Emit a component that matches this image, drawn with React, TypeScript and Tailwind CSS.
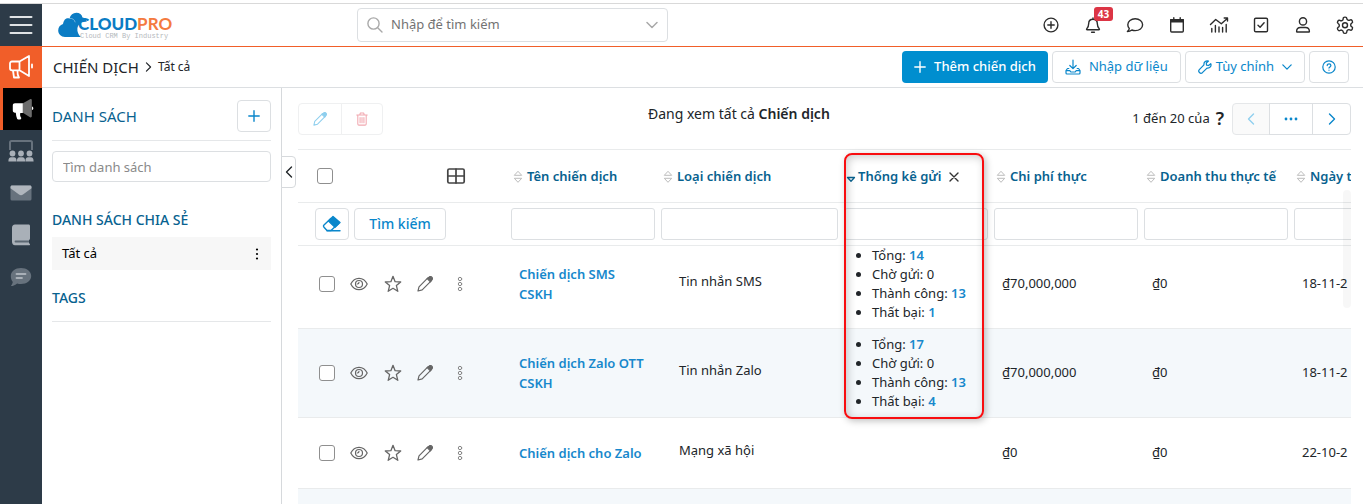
import type { ReactNode } from 'react';

type IconProps = { children: ReactNode; box?: string; className?: string; width?: number };

function Icon({ children, box = '0 0 20 20', className = 'size-5', width = 1.4 }: IconProps) {
  return (
    <svg
      viewBox={box}
      className={className}
      fill="none"
      stroke="currentColor"
      strokeWidth={width}
      strokeLinecap="round"
      strokeLinejoin="round"
      aria-hidden="true"
    >
      {children}
    </svg>
  );
}

const Plus = ({ className = 'size-3' }: { className?: string }) => (
  <Icon box="0 0 12 12" className={className} width={1.4}><path d="M6 .8v10.4M.8 6h10.4" /></Icon>
);
const ChevronRight = ({ className }: { className: string }) => (
  <Icon box="0 0 8 12" className={className} width={1.4}><path d="M1.5 1 6.5 6l-5 5" /></Icon>
);
const ChevronLeft = ({ className }: { className: string }) => (
  <Icon box="0 0 8 12" className={className} width={1.4}><path d="M6.5 1 1.5 6l5 5" /></Icon>
);
const ChevronDown = ({ className }: { className: string }) => (
  <Icon box="0 0 12 8" className={className} width={1.5}><path d="m1 1.500 5 5 5-5" /></Icon>
);
const Pencil = ({ className = 'size-4' }: { className?: string }) => (
  <Icon box="0 0 16 16" className={className} width={1.2}>
    <path d="M1 15l1-4.200L10.600 2.200a2.100 2.100 0 0 1 3.100 3.100L5.200 13.900 1 15Z" />
    <path d="M10.200 2.600 12 1.200a1.800 1.800 0 0 1 2.800 2.800l-1.400 1.800Z" fill="currentColor" />
  </Icon>
);

const headerIcons: { label: string; icon: ReactNode }[] = [
  { label: 'Tạo nhanh', icon: <Icon><circle cx="10" cy="10" r="6.900" /><path d="M10 6.800v6.400M6.800 10h6.400" /></Icon> },
  {
    label: 'Thông báo',
    icon: (
      <Icon>
        <path d="M10 3v1.200M10 4.200c-2.700 0-4.300 1.900-4.300 4.300 0 3.100-.8 4.100-2 5.400-.3.400-.1.900.4.900h11.800c.5 0 .7-.5.4-.9-1.200-1.300-2-2.300-2-5.400 0-2.400-1.600-4.300-4.300-4.300Z" />
        <path d="M8.600 17.200h2.800" />
      </Icon>
    ),
  },
  { label: 'Tin nhắn', icon: <Icon><path d="M10.200 3.800c4.200 0 7.400 2.500 7.400 5.900s-3.200 5.900-7.400 5.900c-1.200 0-2.300-.2-3.300-.6-1.200.9-2.700 1.500-4.500 1.500 1.200-1.100 1.800-2.100 1.900-3-1-1-1.500-2.300-1.500-3.800 0-3.400 3.200-5.900 7.400-5.900Z" /></Icon> },
  {
    label: 'Lịch',
    icon: (
      <Icon>
        <rect x="3.700" y="4.600" width="12.600" height="12.400" rx="1" />
        <path d="M3.700 4.600h12.600v2.200H3.700zM6.800 2.800v2M13.200 2.800v2" fill="currentColor" />
      </Icon>
    ),
  },
  {
    label: 'Báo cáo',
    icon: (
      <Icon>
        <path d="m1.500 9.500 5.200-5 5.600 4.300 6-5.300M15.200 3h3.300v3" />
        <path d="M2.800 13.500V17M6.400 10.500V17M10 12v5M13.600 12.500V17M17.200 9.500V17" />
      </Icon>
    ),
  },
  { label: 'Công việc', icon: <Icon><rect x="3.500" y="3.300" width="13" height="13.400" rx="1.300" /><path d="m7 10.200 2.100 2 4-4.400" /></Icon> },
  { label: 'Tài khoản', icon: <Icon><circle cx="10" cy="6.400" r="3.600" /><path d="M3.600 16.500c0-2.500 1.700-4 3.900-4h5c2.200 0 3.900 1.500 3.900 4 0 .3-.2.500-.5.500H4.100c-.3 0-.5-.2-.5-.5Z" /></Icon> },
  {
    label: 'Cài đặt',
    icon: (
      <Icon box="0 0 24 24" width={1.7}>
        <path d="M12.220 2.500h-.44a2 2 0 0 0-2 2v.18a2 2 0 0 1-1 1.730l-.43.250a2 2 0 0 1-2 0l-.15-.08a2 2 0 0 0-2.730.730l-.22.380a2 2 0 0 0 .730 2.730l.15.100a2 2 0 0 1 1 1.720v.510a2 2 0 0 1-1 1.740l-.15.090a2 2 0 0 0-.73 2.730l.22.380a2 2 0 0 0 2.730.730l.15-.08a2 2 0 0 1 2 0l.43.250a2 2 0 0 1 1 1.730V20a2 2 0 0 0 2 2h.44a2 2 0 0 0 2-2v-.18a2 2 0 0 1 1-1.730l.43-.25a2 2 0 0 1 2 0l.15.080a2 2 0 0 0 2.730-.73l.22-.39a2 2 0 0 0-.73-2.730l-.15-.08a2 2 0 0 1-1-1.740v-.5a2 2 0 0 1 1-1.740l.15-.09a2 2 0 0 0 .730-2.730l-.22-.38a2 2 0 0 0-2.730-.73l-.15.080a2 2 0 0 1-2 0l-.43-.25a2 2 0 0 1-1-1.730V4.500a2 2 0 0 0-2-2z" />
        <circle cx="12" cy="12.200" r="3" />
      </Icon>
    ),
  },
];

const railIcons: { label: string; icon: ReactNode }[] = [
  {
    label: 'Sự kiện',
    icon: (
      <svg viewBox="0 0 26 22" className="h-[22px] w-[26px]" fill="#a9b0b8" aria-hidden="true">
        <path d="M2 10V2.500C2 1.500 2.700 1 3.500 1h19c.8 0 1.500.5 1.500 1.500V10" fill="none" stroke="#67727d" strokeWidth="2" />
        <circle cx="4.500" cy="13.500" r="2.900" /><circle cx="13" cy="13.500" r="2.900" /><circle cx="21.500" cy="13.500" r="2.900" />
        <path d="M.4 21.500c0-3 1-4.300 2.600-4.300h3c1.600 0 2.600 1.300 2.600 4.300ZM8.900 21.500c0-3 1-4.300 2.600-4.300h3c1.600 0 2.600 1.300 2.600 4.300ZM17.400 21.500c0-3 1-4.300 2.600-4.300h3c1.600 0 2.600 1.300 2.600 4.300Z" />
      </svg>
    ),
  },
  {
    label: 'Email',
    icon: (
      <svg viewBox="0 0 22 16" className="h-4 w-[22px]" aria-hidden="true">
        <rect x=".5" y=".5" width="21" height="15" rx="1.500" fill="#67727d" />
        <path d="M2 .5h18c.9 0 1.500.6 1.500 1.500v1.200L13 9.500c-1.200.9-2.800.9-4 0L.5 3.200V2C.5 1.100 1.100.5 2 .5Z" fill="#b0b6bd" />
      </svg>
    ),
  },
  {
    label: 'Tài liệu',
    icon: (
      <svg viewBox="0 0 20 22" className="h-[22px] w-5" aria-hidden="true">
        <path d="M4 .5h13.500c1 0 1.500.6 1.500 1.500v12.500c0 .8-.4 1.300-1 1.500v3.500h.5c.7 0 .7 1.700 0 1.700H4C2 21.200 1 19.700 1 17.800V3.800C1 1.800 2.100.5 4 .5Z" fill="#a9b0b8" />
        <path d="M4.500 16.500H18v2H4.500c-1.200 0-1.200-2 0-2Z" fill="#5b6772" />
      </svg>
    ),
  },
  {
    label: 'Bình luận',
    icon: (
      <svg viewBox="0 0 22 20" className="h-5 w-[22px]" aria-hidden="true">
        <path d="M11 1c5.700 0 10.200 3.500 10.200 8s-4.500 8-10.200 8c-1.400 0-2.700-.2-3.900-.6C5.500 17.800 3.300 19 .9 19c1-1.300 1.700-2.700 1.900-4C1.500 13.300.8 11.300.8 9 .8 4.500 5.300 1 11 1Z" fill="#67727d" />
        <path d="M6.500 7h9M6.500 11h5.500" stroke="#a9b0b8" strokeWidth="1.800" strokeLinecap="round" />
      </svg>
    ),
  },
];

type Stats = { total: number; waiting: number; success: number; failed: number };
type Campaign = { name: string; type: string; stats?: Stats; cost: string; revenue: string; date: string; height: string };

const campaigns: Campaign[] = [
  { name: 'Chiến dịch SMS CSKH', type: 'Tin nhắn SMS', stats: { total: 14, waiting: 0, success: 13, failed: 1 }, cost: '₫70,000,000', revenue: '₫0', date: '18-11-2', height: 'h-[82px] [&>td]:pb-1.5' },
  { name: 'Chiến dịch Zalo OTT CSKH', type: 'Tin nhắn Zalo', stats: { total: 17, waiting: 0, success: 13, failed: 4 }, cost: '₫70,000,000', revenue: '₫0', date: '18-11-2', height: 'h-[89px]' },
  { name: 'Chiến dịch cho Zalo', type: 'Mạng xã hội', cost: '₫0', revenue: '₫0', date: '22-10-2', height: 'h-[71px]' },
];

function SortIcon() {
  return (
    <svg viewBox="0 0 10 14" className="h-3.5 w-2.5 shrink-0" fill="none" stroke="#bdbdbd" strokeLinejoin="round" aria-hidden="true">
      <path d="M5 1.300 8.700 5.300H1.300ZM1.300 8.300h7.400L5 12.300Z" />
    </svg>
  );
}

function HeaderCell({ label }: { label: string }) {
  return (
    <th className="pl-[5px] pt-0.5 text-left font-semibold text-[#08628f]">
      <span className="flex items-center gap-1 whitespace-nowrap text-[13px]"><SortIcon />{label}</span>
    </th>
  );
}

const outlined = 'flex h-8 items-center justify-center rounded border border-[#dcdfe2] bg-white text-[#0a87cb]';

function StatsList({ stats }: { stats: Stats }) {
  const count = 'font-semibold text-[#1788cc]';
  return (
    <ul className="list-disc pl-[31px] leading-[19px]">
      <li>Tổng: <a href="#total" className={count}>{stats.total}</a></li>
      <li>Chờ gửi: {stats.waiting}</li>
      <li>Thành công: <a href="#success" className={count}>{stats.success}</a></li>
      <li>Thất bại: <a href="#failed" className={count}>{stats.failed}</a></li>
    </ul>
  );
}

function CampaignRow({ row }: { row: Campaign }) {
  return (
    <tr className={`border-b border-[#e9ebec] even:bg-[#f4f8fb] ${row.height}`}>
      <td>
        <div className="flex items-center pl-[21px] text-[#666]">
          <input type="checkbox" aria-label={`Chọn ${row.name}`} className="size-4 appearance-none rounded-[3px] border border-[#8f8f8f] bg-white" />
          <button aria-label="Xem" className="ml-[15px]">
            <Icon box="0 0 18 14" className="h-3.5 w-[18px]" width={1.2}>
              <path d="M.8 7C2.500 3.500 5.500 1.300 9 1.300S15.500 3.500 17.200 7c-1.700 3.500-4.700 5.700-8.200 5.700S2.500 10.500.8 7Z" />
              <circle cx="9" cy="7" r="3.500" /><path d="M9 5.300A1.700 1.700 0 0 1 7.300 7" />
            </Icon>
          </button>
          <button aria-label="Yêu thích" className="ml-4">
            <Icon box="0 0 18 18" className="size-[18px]" width={1.3}>
              <path d="m9 1.300 2.100 5.400 5.600.3-4.300 3.600 1.400 5.700L9 13.300l-4.800 3 1.400-5.700L1.300 7l5.600-.3Z" />
            </Icon>
          </button>
          <button aria-label="Sửa" className="ml-[15px]"><Pencil /></button>
          <button aria-label="Thêm" className="ml-6 text-[#888]">
            <Icon box="0 0 6 16" className="h-4 w-1.5" width={1}>
              <circle cx="3" cy="3" r="1.700" /><circle cx="3" cy="8" r="1.700" /><circle cx="3" cy="13" r="1.700" />
            </Icon>
          </button>
        </div>
      </td>
      <td className="px-[11px]"><a href="#campaign" className="block font-semibold leading-5 text-[#1788cc]">{row.name}</a></td>
      <td className="pl-[21px]"><span className="block pb-1">{row.type}</span></td>
      <td>{row.stats && <StatsList stats={row.stats} />}</td>
      <td className="px-[11px]">{row.cost}</td>
      <td className="px-[11px]">{row.revenue}</td>
      <td className="px-[11px]">{row.date}</td>
    </tr>
  );
}

function Megaphone({ solid = false }: { solid?: boolean }) {
  return solid ? (
    <svg viewBox="0 0 22 22" className="size-[22px]" aria-hidden="true">
      <path d="M10.500 5.500 18 1.200c.9-.5 1.800 0 1.800.9v16.200c0 .9-.9 1.400-1.800.9l-7.500-4.800Z" fill="#6d6d6d" />
      <path d="M10.800 5.300H3C1.600 5.300.8 6.200.8 7.500v5c0 1.300.8 2.200 2.200 2.200h.8c.2 2.300.6 4.300 1.300 6 .2.500.6.700 1.100.7h1.900c1 0 1.500-1 .9-1.800-.9-1.200-1.100-2.700-.7-4.500h2.500ZM20 8.500c1.800.3 1.800 3.300 0 3.600Z" fill="white" />
    </svg>
  ) : (
    <Icon box="0 0 26 26" className="size-[26px]" width={1.8}>
      <path d="M11.500 7.500H4C2.700 7.500 2 8.300 2 9.500v4.800c0 1.200.7 2 2 2h7.500ZM11.500 7.500 21 2v20l-9.500-5.700M24 10.500v3M5 16.500l1 7h5c-1.300-1.500-1.700-3.500-1.500-6.500" />
    </Icon>
  );
}

export default function App() {
  return (
    <div className="flex h-screen min-h-0 flex-col overflow-hidden bg-white font-['Noto_Sans','Open_Sans',sans-serif] text-[13px] text-[#212529]">
      <div className="h-1 shrink-0 border-b border-[#d9d9d9]" />
      <div className="flex min-h-0 flex-1">
        <nav aria-label="Chính" className="flex w-[42px] shrink-0 flex-col bg-[#2d3b48]">
          <button aria-label="Mở menu" className="flex h-[42px] items-center justify-center text-[#dfe2e5]">
            <Icon box="0 0 24 20" className="h-5 w-6" width={2}><path d="M1.500 2h21M1.500 10h21M1.500 18h21" /></Icon>
          </button>
          <a href="#marketing" aria-label="Tiếp thị" className="flex h-[42px] items-center justify-center bg-[#f15e29] text-white"><Megaphone /></a>
          <a href="#campaigns" aria-label="Chiến dịch" className="flex h-[42px] items-center justify-center border-l-[3px] border-[#f15e29] bg-black"><Megaphone solid /></a>
          {railIcons.map(item => (
            <a key={item.label} href="#module" aria-label={item.label} className="flex h-[42px] items-center justify-center">{item.icon}</a>
          ))}
        </nav>

        <div className="flex min-w-0 flex-1 flex-col">
          <header className="flex h-[43px] shrink-0 items-center border-b border-[#f15e29]">
            <a href="#home" aria-label="CloudPro" className="flex h-full w-[315px] items-center pl-4">
              <svg viewBox="0 0 34 26" className="h-[26px] w-[34px] shrink-0" aria-hidden="true">
                <path d="M7 25C3 25 .2 22 .2 18.600c0-3.200 2-5.700 4.800-6.500C5.800 6.800 9 5.500 11.500 6.500 12.500 3 15 .8 18.300.8c3.200 0 5.700 2 6.200 4.800 2.500.2 4 2.200 4.200 4.200-5.300-.6-8.700 2.500-9.300 6.500-.4 3.400.9 6.500 3.500 8.700Z" fill="#0b7cc4" />
                <path d="M11.500 6.500c2.600-.6 5 1 5.700 3.800" fill="none" stroke="white" strokeWidth=".4" />
              </svg>
              <span className="-ml-3.5 flex flex-col pt-1">
                <span className="flex font-['Lato','Noto_Sans',sans-serif] text-[17px] font-black leading-[18px] text-[#0b7cc4]">CLOUD<span className="font-bold text-[#f47a40]">PRO</span></span>
                <span className="whitespace-nowrap pl-0.5 font-['Liberation_Mono',monospace] text-[7px] leading-[7px] text-[#b5b9bd]">Cloud CRM By Industry</span>
              </span>
            </a>
            <label className="flex h-[34px] w-[311px] items-center rounded border border-[#dcdfe2] px-[9px] text-[#a9a9a9]">
              <Icon box="0 0 16 16" className="size-4 shrink-0" width={1.4}><circle cx="6.500" cy="6.500" r="5.600" /><path d="m10.700 10.700 4.300 4.300" /></Icon>
              <input aria-label="Tìm kiếm toàn hệ thống" placeholder="Nhập để tìm kiếm" className="ml-2 min-w-0 flex-1 outline-none placeholder:text-[#737373]" />
              <ChevronDown className="h-2 w-3" />
            </label>
            <div className="ml-auto flex items-center gap-[22px] pr-2 text-[#2c2c2c]">
              {headerIcons.map(item => (
                <button key={item.label} aria-label={item.label} className="relative">
                  {item.icon}
                  {item.label === 'Thông báo' && (
                    <span className="absolute -top-2 left-[11px] flex h-3.5 w-[19px] items-center justify-center rounded-[3px] bg-[#dc3545] text-[10px] font-bold text-white">43</span>
                  )}
                </button>
              ))}
            </div>
          </header>

          <div className="flex h-[41px] shrink-0 items-center border-b border-[#dcdfe2] pl-[11px] pr-3.5">
            <h1 className="text-[15px]">CHIẾN DỊCH</h1>
            <ChevronRight className="ml-1.5 h-2.5 w-[7px]" />
            <span className="ml-1.5 text-[12px]">Tất cả</span>
            <div className="ml-auto flex gap-1">
              <button className="flex h-8 items-center gap-2 rounded bg-[#008ecf] px-3 font-medium text-white"><Plus />Thêm chiến dịch</button>
              <button className={`${outlined} gap-2 px-3`}>
                <Icon box="0 0 16 16" className="size-4" width={1.2}><path d="M8 1v8.500M4.800 6.500 8 9.700l3.200-3.200M3.800 9.500H2.500L1 11.500V14c0 .6.400 1 1 1h12c.6 0 1-.4 1-1v-2.500l-1.500-2h-1.300M1.300 11.700h3.500l1 1.300h4.400l1-1.300h3.500" /></Icon>
                Nhập dữ liệu
              </button>
              <button className={`${outlined} gap-1 px-3`}>
                <Icon box="0 0 16 16" className="size-3.5" width={1.4}><path d="M14.600 4.200 12 6.300 9.800 5.800 9.500 3.500 12 1.200c-2.700-.9-5.600.9-5.200 4.300L1.500 11c-2 2.200 1.300 5.500 3.500 3.500l5.300-5.200c3.300.5 5.400-2.300 4.300-5.100Z" /></Icon>
                Tùy chỉnh
                <ChevronDown className="ml-1 h-2 w-2.5" />
              </button>
              <button aria-label="Trợ giúp" className={`${outlined} w-10`}>
                <Icon box="0 0 14 14" className="size-3.5" width={1.2}><circle cx="7" cy="7" r="6.200" /><path d="M5.200 5.600c0-2.300 3.700-2.300 3.700 0 0 1.300-1.900 1.300-1.900 2.500M7 10v.2" /></Icon>
              </button>
            </div>
          </div>

          <div className="flex min-h-0 flex-1">
            <aside className="flex w-[240px] shrink-0 flex-col border-r border-[#d6d9dc] px-2.5">
              <div className="flex h-[53px] items-center justify-between border-b border-[#e5e7e9] pt-1">
                <h2 className="text-[15px] text-[#08628f]">DANH SÁCH</h2>
                <button aria-label="Thêm danh sách" className={`${outlined} w-[34px]`}><Plus /></button>
              </div>
              <input aria-label="Tìm danh sách" placeholder="Tìm danh sách" className="mt-2.5 h-[31px] rounded border border-[#dcdfe2] px-2.5 placeholder:text-[#8a8a8a]" />
              <h2 className="mt-7 text-[14px] leading-5 font-medium text-[#08628f]">DANH SÁCH CHIA SẺ</h2>
              <div className="mt-[7px] flex h-[33px] items-center justify-between bg-[#f7f7f7] px-2.5 text-black">
                <a href="#all">Tất cả</a>
                <button aria-label="Tùy chọn danh sách" className="px-0.5">
                  <svg viewBox="0 0 4 14" className="h-3.5 w-1" aria-hidden="true"><circle cx="2" cy="2.500" r="1.100" /><circle cx="2" cy="7" r="1.100" /><circle cx="2" cy="11.500" r="1.100" /></svg>
                </button>
              </div>
              <h2 className="mt-[18px] border-b border-[#e5e7e9] pb-[13px] text-[14px] leading-5 font-medium text-[#08628f]">TAGS</h2>
            </aside>

            <main className="relative flex min-w-0 flex-1 flex-col pl-4 pr-3">
              <button aria-label="Thu gọn" className="absolute -left-px top-[68px] flex h-8 w-[15px] items-center justify-center rounded-r border border-[#d6d9dc] bg-white"><ChevronLeft className="h-3 w-2" /></button>
              <div className="grid h-[61px] shrink-0 grid-cols-[350px_1fr_auto] items-center">
                <div className="flex">
                  <button aria-label="Sửa mục đã chọn" disabled className="flex h-8 w-11 items-center justify-center rounded-l border border-[#eff0f1] text-[#8fcfee]"><Pencil className="size-3.5" /></button>
                  <button aria-label="Xóa mục đã chọn" disabled className="-ml-px flex h-8 w-[42px] items-center justify-center rounded-r border border-[#eff0f1] text-[#f1a8b0]">
                    <Icon box="0 0 14 16" className="h-3.5 w-3.5" width={1.2}><path d="M1 3.500h12M4.500 3.300 5 1.200h4l.5 2.100M2.200 3.700v10c0 .8.400 1.300 1.300 1.300h7c.9 0 1.300-.5 1.300-1.300v-10M4.800 6.300v6M7 6.300v6M9.200 6.300v6" /></Icon>
                  </button>
                </div>
                <p className="pb-2.5 text-[14px]">Đang xem tất cả <span className="font-semibold">Chiến dịch</span></p>
                <div className="flex items-center justify-end">
                  <span>1 đến 20 của</span>
                  <button aria-label="Đếm tổng số" className="ml-1.5 mr-2 text-[18px] font-semibold">?</button>
                  <button aria-label="Trang trước" disabled className="flex h-8 w-[38px] items-center justify-center rounded-l border border-[#e5e7e9] bg-[#fafafa] text-[#8fcfee]"><ChevronLeft className="h-3 w-2" /></button>
                  <button aria-label="Chọn trang" className="-ml-px flex h-8 w-11 items-center justify-center border border-[#dcdfe2] text-[#0a87cb]">
                    <svg viewBox="0 0 14 4" className="h-1 w-3.5" fill="currentColor" aria-hidden="true"><circle cx="2" cy="2" r="1.400" /><circle cx="7" cy="2" r="1.400" /><circle cx="12" cy="2" r="1.400" /></svg>
                  </button>
                  <button aria-label="Trang sau" className="-ml-px flex h-8 w-[39px] items-center justify-center rounded-r border border-[#dcdfe2] text-[#0a87cb]"><ChevronRight className="h-3 w-2" /></button>
                </div>
              </div>

              <div className="relative min-h-0 flex-1 overflow-hidden border-t border-[#e9ebec]">
                <table className="w-[1143px] table-fixed border-collapse">
                  <colgroup>
                    <col className="w-[210px]" /><col className="w-[150px]" /><col className="w-[183px]" /><col className="w-[150px]" /><col className="w-[150px]" /><col className="w-[150px]" /><col className="w-[150px]" />
                  </colgroup>
                  <thead>
                    <tr className="h-[52px] border-b border-[#e9ebec]">
                      <th>
                        <span className="flex items-center pl-[19px] text-[#444]">
                          <input type="checkbox" aria-label="Chọn tất cả" className="size-4 appearance-none rounded-[3px] border border-[#8f8f8f] bg-white" />
                          <button aria-label="Chọn cột" className="ml-[113px]"><Icon box="0 0 20 16" className="h-4 w-5" width={1.7}><rect x="1.800" y="1" width="16.400" height="14" rx="1.500" /><path d="M10 1v14M2 8h16" /></Icon></button>
                        </span>
                      </th>
                      <HeaderCell label="Tên chiến dịch" />
                      <HeaderCell label="Loại chiến dịch" />
                      <th className="pl-[5px] pt-0.5 font-semibold text-[#08628f]">
                        <span className="flex items-center whitespace-nowrap">
                          <Icon box="0 0 10 12" className="mr-0.5 h-3 w-2.5" width={1.3}><path d="M1.500 6.500h7L5 10.200Z" /></Icon>
                          Thống kê gửi
                          <button aria-label="Bỏ sắp xếp" className="ml-2 text-[#333]"><Icon box="0 0 10 10" className="size-2.5" width={1.4}><path d="m1 1 8 8M9 1 1 9" /></Icon></button>
                        </span>
                      </th>
                      <HeaderCell label="Chi phí thực" />
                      <HeaderCell label="Doanh thu thực tế" />
                      <HeaderCell label="Ngày t" />
                    </tr>
                    <tr className="h-[43px] border-b border-[#e9ebec]">
                      <td>
                        <div className="flex gap-[5px] pl-[17px]">
                          <button aria-label="Xóa bộ lọc" className={`${outlined} w-[34px]`}>
                            <Icon box="0 0 20 18" className="h-[18px] w-5" width={1.4}><path d="M8.800 3.500 2 10c-.7.700-.7 1.500 0 2.200l3 3.300h4l7.500-7" /><path d="M11 1.500 18 7.500l-5 4.800L6.500 6Z" fill="currentColor" /><path d="M5 15.800h13" /></Icon>
                          </button>
                          <button className={`${outlined} w-[92px] text-[14px] font-medium`}>Tìm kiếm</button>
                        </div>
                      </td>
                      {['Tên chiến dịch', 'Loại chiến dịch', 'Thống kê gửi', 'Chi phí thực', 'Doanh thu thực tế', 'Ngày'].map(label => (
                        <td key={label} className="px-[3px]">
                          <input aria-label={`Lọc theo ${label}`} className="block h-8 w-full rounded-[3px] border border-[#dcdfe2] px-2" />
                        </td>
                      ))}
                    </tr>
                  </thead>
                  <tbody>
                    {campaigns.map(row => <CampaignRow key={row.name} row={row} />)}
                    <tr className="h-[71px] even:bg-[#f4f8fb]"><td colSpan={7} /></tr>
                  </tbody>
                </table>
                <div className="absolute right-0 top-10 h-[118px] w-2 rounded bg-black/3" />
              </div>
              <div className="pointer-events-none absolute left-[562px] top-[65px] h-[266px] w-[140px] rounded-lg border-2 border-[#f80d10] shadow-[2px_2px_7px_rgba(0,0,0,0.25),inset_2px_2px_9px_rgba(0,0,0,0.2)]" />
            </main>
          </div>
        </div>
      </div>
    </div>
  );
}
